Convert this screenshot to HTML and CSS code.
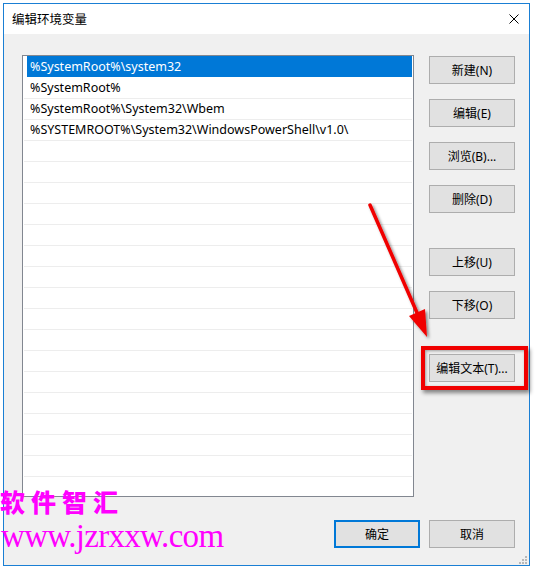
FILE: index.html
```html
<!DOCTYPE html>
<html lang="zh-CN">
<head>
<meta charset="utf-8">
<title>编辑环境变量</title>
<link rel="stylesheet" href="styles.css">
</head>
<body>
<div class="window">
  <div class="titlebar">
    <span class="title">编辑环境变量</span>
    <svg class="close" width="10" height="10" viewBox="0 0 10 10"><path d="M0.5 0.5 L9.5 9.5 M9.5 0.5 L0.5 9.5" stroke="#000" stroke-width="1" fill="none"/></svg>
  </div>
  <div class="content">
    <div class="main">
      <div class="listbox">
        <div class="row selected">%SystemRoot%\system32</div>
        <div class="row">%SystemRoot%</div>
        <div class="row">%SystemRoot%\System32\Wbem</div>
        <div class="row">%SYSTEMROOT%\System32\WindowsPowerShell\v1.0\</div>
        <div class="row"></div><div class="row"></div><div class="row"></div><div class="row"></div>
        <div class="row"></div><div class="row"></div><div class="row"></div><div class="row"></div>
        <div class="row"></div><div class="row"></div><div class="row"></div><div class="row"></div>
        <div class="row"></div><div class="row"></div><div class="row"></div><div class="row"></div>
      </div>
      <div class="side">
        <button class="btn">新建(N)</button>
        <button class="btn">编辑(E)</button>
        <button class="btn">浏览(B)...</button>
        <button class="btn">删除(D)</button>
        <button class="btn group">上移(U)</button>
        <button class="btn">下移(O)</button>
        <button class="btn group">编辑文本(T)...</button>
      </div>
    </div>
    <div class="footer">
      <button class="btn default">确定</button>
      <button class="btn">取消</button>
    </div>
  </div>
  <svg class="grip" width="9" height="9" viewBox="0 0 9 9">
    <rect x="7" y="1" width="2" height="2" fill="#b8b8b8"/>
    <rect x="4" y="4" width="2" height="2" fill="#b8b8b8"/>
    <rect x="7" y="4" width="2" height="2" fill="#b8b8b8"/>
    <rect x="1" y="7" width="2" height="2" fill="#b8b8b8"/>
    <rect x="4" y="7" width="2" height="2" fill="#b8b8b8"/>
    <rect x="7" y="7" width="2" height="2" fill="#b8b8b8"/>
  </svg>
</div>

<div class="highlight"></div>
<svg class="arrow" width="539" height="570" viewBox="0 0 539 570">
  <defs>
    <filter id="sh" x="-20%" y="-20%" width="140%" height="140%">
      <feDropShadow dx="2" dy="2" stdDeviation="1.5" flood-color="#000" flood-opacity="0.45"/>
    </filter>
  </defs>
  <g filter="url(#sh)">
    <line x1="370" y1="205" x2="418" y2="315" stroke="#f00000" stroke-width="3.5" stroke-linecap="round"/>
    <polygon points="427,337 409,316 425,309" fill="#f00000"/>
  </g>
</svg>

<div class="watermark">
  <div class="wm-cn">软件智汇</div>
  <div class="wm-url">www.jzrxxw.com</div>
</div>
</body>
</html>
```

FILE: styles.css
```css
html, body {
  margin: 0;
  padding: 0;
  background: #ffffff;
}

body {
  font-family: "Noto Sans", "Noto Sans CJK SC", sans-serif;
  font-size: 12px;
  color: #000;
  position: relative;
  width: 539px;
  height: 570px;
  overflow: hidden;
}

.window {
  margin: 3px 0 0 3px;
  width: 525px;
  height: 561px;
  border: 1px solid #1a7fd4;
  display: flex;
  flex-direction: column;
  position: relative;
}

.titlebar {
  height: 30px;
  background: #fff;
  display: flex;
  align-items: center;
  justify-content: space-between;
  padding: 0 10px 0 8px;
}

.title {
  font-family: "Noto Sans CJK SC", sans-serif;
  font-size: 12.5px;
  line-height: 16px;
  margin-top: -1px;
}

.close {
  display: block;
}

.content {
  flex: 1;
  background: #f0f0f0;
  padding: 21px 14px 17px 18px;
  display: flex;
  flex-direction: column;
}

.main {
  display: flex;
  gap: 15px;
}

.listbox {
  width: 390px;
  height: 439px;
  border: 1px solid #828790;
  background: #fff;
  padding: 1px 1px 0 1px;
  box-sizing: content-box;
  overflow: hidden;
  display: flex;
  flex-direction: column;
}

.row {
  height: 20px;
  flex: none;
  border-bottom: 1px solid #ededed;
  padding-left: 6px;
  line-height: 20px;
  white-space: nowrap;
  font-size: 12.5px;
}

.row.selected {
  background: #0078d7;
  color: #fff;
  margin-left: 3px;
  padding-left: 3px;
  box-shadow: 0 -1px 0 #0078d7;
  border-bottom-color: #fff;
}

.side {
  width: 86px;
  display: flex;
  flex-direction: column;
  gap: 15px;
  padding-top: 1px;
}

.btn {
  width: 86px;
  height: 28px;
  background: #e1e1e1;
  border: 1px solid #adadad;
  border-radius: 0;
  font-family: "Noto Sans", "Noto Sans CJK SC", sans-serif;
  font-size: 12px;
  color: #000;
  padding: 0;
  margin: 0;
  text-align: center;
}

.btn.group {
  margin-top: 20px;
}

.footer {
  margin-top: 23px;
  display: flex;
  justify-content: flex-end;
  gap: 9px;
}

.btn.default {
  border: 2px solid #0078d7;
}

.grip {
  position: absolute;
  right: 2px;
  bottom: 1px;
}

.highlight {
  position: absolute;
  left: 421px;
  top: 346px;
  width: 99px;
  height: 36px;
  border: 4px solid #f00000;
  box-shadow: 2px 3px 4px rgba(0, 0, 0, 0.45), inset 1px 1px 3px rgba(0, 0, 0, 0.35);
}

.arrow {
  position: absolute;
  left: 0;
  top: 0;
  pointer-events: none;
}

.watermark {
  position: absolute;
  left: 0;
  top: 486px;
  color: #ff00ff;
}

.wm-cn {
  font-family: "Noto Sans CJK SC", sans-serif;
  font-weight: 900;
  font-size: 25px;
  letter-spacing: 6px;
  line-height: 30px;
}

.wm-url {
  font-family: "Liberation Serif", serif;
  font-size: 33px;
  line-height: 40px;
  letter-spacing: -0.7px;
  padding-left: 1px;
}
```
